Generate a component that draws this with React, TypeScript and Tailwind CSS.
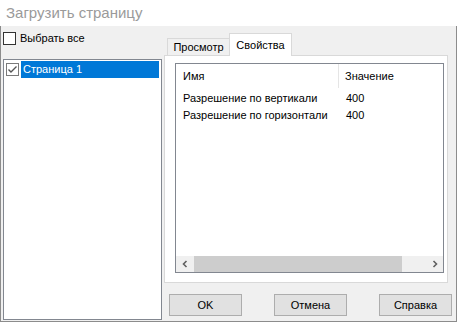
import { ReactNode } from "react";

const font = { fontFamily: '"Liberation Sans", Arial, sans-serif' };

function CheckBox({ checked, dim }: { checked?: boolean; dim?: boolean }) {
    return (
        <div className={`w-[13px] h-[13px] shrink-0 bg-white border ${dim ? "border-[#7a7a7a]" : "border-[#333333]"} flex items-center justify-center`}>
            {checked && (
                <svg width="11" height="11" viewBox="0 0 11 11">
                    <polyline points="1.5,5.5 4,8 9.5,2.5" fill="none" stroke={dim ? "#555" : "#222"} strokeWidth="1.4" />
                </svg>
            )}
        </div>
    );
}

function Btn({ children }: { children: ReactNode }) {
    return (
        <div className="w-[73px] h-[22px] bg-[#e1e1e1] border border-[#adadad] flex items-center justify-center text-[11px] text-black">
            {children}
        </div>
    );
}

function Arrow({ dir }: { dir: "l" | "r" }) {
    return (
        <div className="w-[17px] h-[16px] flex items-center justify-center">
            <svg width="8" height="8" viewBox="0 0 8 8">
                <polyline
                    points={dir === "l" ? "5.5,1 2.5,4 5.5,7" : "2.5,1 5.5,4 2.5,7"}
                    fill="none"
                    stroke="#606060"
                    strokeWidth="1.6"
                />
            </svg>
        </div>
    );
}

export default function App() {
    const rows = [
        { name: "Разрешение по вертикали", value: "400" },
        { name: "Разрешение по горизонтали", value: "400" },
    ];

    return (
        <div className="w-[458px] h-[323px] bg-white overflow-hidden text-black" style={font}>
            {/* title bar */}
            <div className="h-[26px] flex items-center pl-[6px] text-[15px] text-[#9a9a9a]">
                Загрузить страницу
            </div>

            <div className="w-[457px] h-[296px] bg-[#f0f0f0] border-l border-r border-b border-[#8c8c8c] flex">
                {/* left column */}
                <div className="pl-[2px] pt-[6px] flex flex-col">
                    <div className="flex items-center gap-[4px] h-[13px] text-[11px]">
                        <CheckBox />
                        <span>Выбрать все</span>
                    </div>
                    <div className="mt-[14px] w-[159px] h-[261px] bg-white border border-[#828790] pt-[1px] pl-[2px]">
                        <div className="flex items-center h-[17px]">
                            <CheckBox checked dim />
                            <div className="ml-[2px] w-[138px] h-[17px] bg-[#0078d7] text-white text-[11px] flex items-center pl-[2px]">
                                Страница 1
                            </div>
                        </div>
                    </div>
                </div>

                {/* right column */}
                <div className="ml-[2px] pt-[7px] flex flex-col">
                    <div className="h-[22px] flex items-end pl-[3px] text-[11px]">
                        <div className="w-[62px] h-[17px] border-l border-t border-[#d9d9d9] bg-[#f0f0f0] flex items-center justify-center">
                            Просмотр
                        </div>
                        <div className="relative z-10 -mb-px w-[63px] h-[23px] border-l border-t border-r border-[#d9d9d9] bg-white flex items-start justify-center pt-[3px]">
                            Свойства
                        </div>
                    </div>
                    <div className="w-[284px] h-[228px] bg-white border border-[#d9d9d9] pl-[10px] pt-[7px]">
                        <div className="w-[269px] h-[210px] border border-[#828790] flex flex-col text-[11px]">
                            <div className="h-[24px] flex shrink-0">
                                <div className="w-[163px] pl-[7px] flex items-center border-r border-[#e5e5e5]">Имя</div>
                                <div className="pl-[6px] flex items-center">Значение</div>
                            </div>
                            <div className="mt-[2px] flex flex-col">
                                {rows.map((r) => (
                                    <div key={r.name} className="h-[17px] flex items-center">
                                        <div className="w-[163px] pl-[7px]">{r.name}</div>
                                        <div className="pl-[7px]">{r.value}</div>
                                    </div>
                                ))}
                            </div>
                            <div className="flex-1" />
                            <div className="h-[16px] bg-[#f0f0f0] flex items-center shrink-0">
                                <Arrow dir="l" />
                                <div className="ml-[1px] w-[208px] h-[16px] bg-[#cdcdcd]" />
                                <div className="flex-1" />
                                <Arrow dir="r" />
                            </div>
                        </div>
                    </div>
                    <div className="mt-[11px] pl-[5px] flex gap-[32px]">
                        <Btn>OK</Btn>
                        <Btn>Отмена</Btn>
                        <Btn>Справка</Btn>
                    </div>
                </div>
            </div>
        </div>
    );
}
